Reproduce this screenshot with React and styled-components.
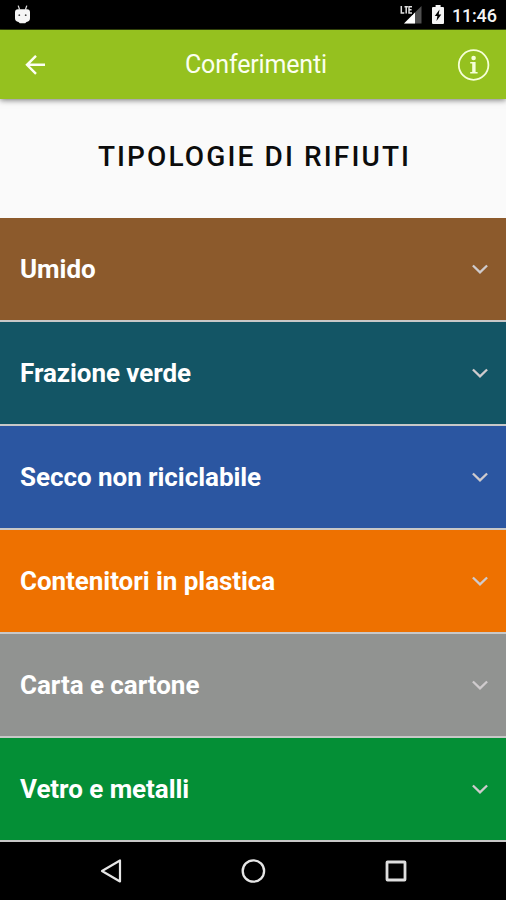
import React from 'react';
import styled, { createGlobalStyle } from 'styled-components';

const GlobalStyle = createGlobalStyle`
  * {
    box-sizing: border-box;
  }

  body {
    margin: 0;
    background-color: #fafafa;
    font-family: Roboto, sans-serif;
  }
`;

const Screen = styled.div`
  display: flex;
  flex-direction: column;
  width: 506px;
  height: 900px;
  overflow: hidden;
  background-color: #fafafa;
`;

const StatusBar = styled.div`
  display: flex;
  align-items: center;
  height: 30px;
  flex-shrink: 0;
  padding: 0 9px 0 13px;
  background-color: #000;
  border-bottom: 1px solid #3a4d0c;
`;

const StatusIcons = styled.div`
  display: flex;
  align-items: center;
  gap: 8px;
  margin-left: auto;
`;

const Clock = styled.span`
  width: 45px;
  padding-top: 2px;
  color: #f4f4f4;
  font-size: 18px;
  font-weight: 500;
  line-height: 24px;
  letter-spacing: -0.2px;
  white-space: nowrap;
`;

const Header = styled.header`
  display: grid;
  grid-template-columns: 70px 1fr 64px;
  align-items: center;
  height: 69px;
  flex-shrink: 0;
  background-color: #95c11f;
  box-shadow: 0 1px 6px rgba(0,0,0,0.55);
`;

const HeaderButton = styled.button`
  display: flex;
  align-items: center;
  height: 69px;
  padding: 0;
  padding-left: ${props => props.$indent}px;
  border: none;
  background: none;
  cursor: pointer;
`;

const HeaderTitle = styled.div`
  padding-top: 1px;
  color: #fbfff0;
  font-size: 25px;
  line-height: 30px;
  letter-spacing: -0.15px;
  text-align: center;
`;

const Title = styled.h1`
  display: flex;
  align-items: center;
  justify-content: center;
  height: 119.4px;
  flex-shrink: 0;
  margin: 0;
  padding: 0 0 4px 3px;
  color: #0c0c0c;
  font-size: 28px;
  font-weight: 500;
  letter-spacing: 2.12px;
  text-transform: uppercase;
`;

const List = styled.ul`
  margin: 0;
  padding: 0;
  list-style: none;
`;

const Row = styled.li`
  display: flex;
  align-items: center;
  justify-content: space-between;
  height: 103.9px;
  padding: 0 17px 0 20px;
  background-color: ${props => props.$color};
  border-bottom: 2px solid #c8c8c8;
  cursor: pointer;
`;

const RowLabel = styled.span`
  color: #fff;
  font-size: 26px;
  font-weight: 700;
  line-height: 32px;
  letter-spacing: -0.05px;
`;

const NavBar = styled.nav`
  display: flex;
  flex: 1;
  align-items: center;
  justify-content: space-between;
  padding: 0 98px;
  background-color: #000;
`;

const rows = [
  { name: 'Umido', color: '#8c5a2c' },
  { name: 'Frazione verde', color: '#135565' },
  { name: 'Secco non riciclabile', color: '#2b56a1' },
  { name: 'Contenitori in plastica', color: '#ee7100' },
  { name: 'Carta e cartone', color: '#919391' },
  { name: 'Vetro e metalli', color: '#048f36' },
];

function AndroidIcon() {
  return (
    <svg width="20" height="20" viewBox="0 0 20 20">
      <path d="M5.2 .6l1.4 4M13.8 .6l-1.4 4" stroke="#ddd" strokeWidth="1.3" />
      <path d="M2 7.2Q2 4.4 5 4.2h9Q17 4.4 17 7.2v6Q17 16.4 13.5 17l-1.3 1.2H6.8L5.5 17Q2 16.4 2 13.2z" fill="#f5f5f5" />
      <circle cx="6.3" cy="10.2" r="0.9" fill="#444" />
      <circle cx="12.7" cy="10.2" r="0.9" fill="#444" />
    </svg>
  );
}

function SignalIcon() {
  return (
    <svg width="24" height="20" viewBox="0 0 24 20">
      <path d="M21.5 1v17.5H4z" fill="#505050" />
      <path d="M15 7.5v11H4z" fill="#fff" />
      <path d="M0 0h13v10H0z" fill="#000" />
      <path d="M1.3 1v7h3M4.5 1.7h3.4M6.2 1.7v6.8M12 1.7H9v6.2h3M9 4.8h2.6" fill="none" stroke="#e0e0e0" strokeWidth="1.5" />
    </svg>
  );
}

function BatteryIcon() {
  return (
    <svg width="12" height="19" viewBox="0 0 12 19">
      <path d="M3.6 0h5v2H11q1 0 1 1v15q0 1-1 1H1q-1 0-1-1V3q0-1 1-1h2.6z" fill="#f5f5f5" />
      <path d="M7.5 4.5L2.8 11h2.6l-.9 5L9.3 9.4H6.7z" fill="#000" />
    </svg>
  );
}

function BackIcon() {
  return (
    <svg width="20" height="20" viewBox="0 0 20 20">
      <path d="M20 9.8H2M11 .8l-9 9 9 9" fill="none" stroke="#fcfff2" strokeWidth="2.4" />
    </svg>
  );
}

function InfoIcon() {
  return (
    <svg width="34" height="34" viewBox="0 0 34 34">
      <circle cx="16.6" cy="17" r="14.8" fill="none" stroke="#f6ffd8" strokeWidth="1.8" />
      <circle cx="16.6" cy="10" r="2.3" fill="#f6ffd8" />
      <path d="M13.2 13.9h5.4v10h2v1.6h-7.4v-1.6h2v-8.4h-2z" fill="#f6ffd8" />
    </svg>
  );
}

function Chevron() {
  return (
    <svg width="18" height="12" viewBox="0 0 18 12">
      <path d="M1.9 2.5L9 9.4l7.1-6.9" fill="none" stroke="#cfcbcd" strokeWidth="2.3" />
    </svg>
  );
}

export default function App() {
  return (
    <Screen>
      <GlobalStyle />
      <StatusBar>
        <AndroidIcon />
        <StatusIcons>
          <SignalIcon />
          <BatteryIcon />
          <Clock>11:46</Clock>
        </StatusIcons>
      </StatusBar>
      <Header>
        <HeaderButton $indent={25} aria-label="Indietro"><BackIcon /></HeaderButton>
        <HeaderTitle>Conferimenti</HeaderTitle>
        <HeaderButton $indent={15} aria-label="Informazioni"><InfoIcon /></HeaderButton>
      </Header>
      <Title>Tipologie di rifiuti</Title>
      <List>
        {rows.map(row => (
          <Row key={row.name} $color={row.color}>
            <RowLabel>{row.name}</RowLabel>
            <Chevron />
          </Row>
        ))}
      </List>
      <NavBar>
        <svg width="24" height="26" viewBox="0 0 24 26">
          <path d="M22 2.5v21L4 13z" fill="none" stroke="#e6e6e6" strokeWidth="2.2" strokeLinejoin="round" />
        </svg>
        <svg width="26" height="26" viewBox="0 0 26 26">
          <circle cx="13.4" cy="13" r="10.7" fill="none" stroke="#e6e6e6" strokeWidth="2.3" />
        </svg>
        <svg width="24" height="24" viewBox="0 0 24 24">
          <rect x="3" y="3" width="18" height="18" rx="0.5" fill="none" stroke="#dedede" strokeWidth="2.8" />
        </svg>
      </NavBar>
    </Screen>
  );
}
